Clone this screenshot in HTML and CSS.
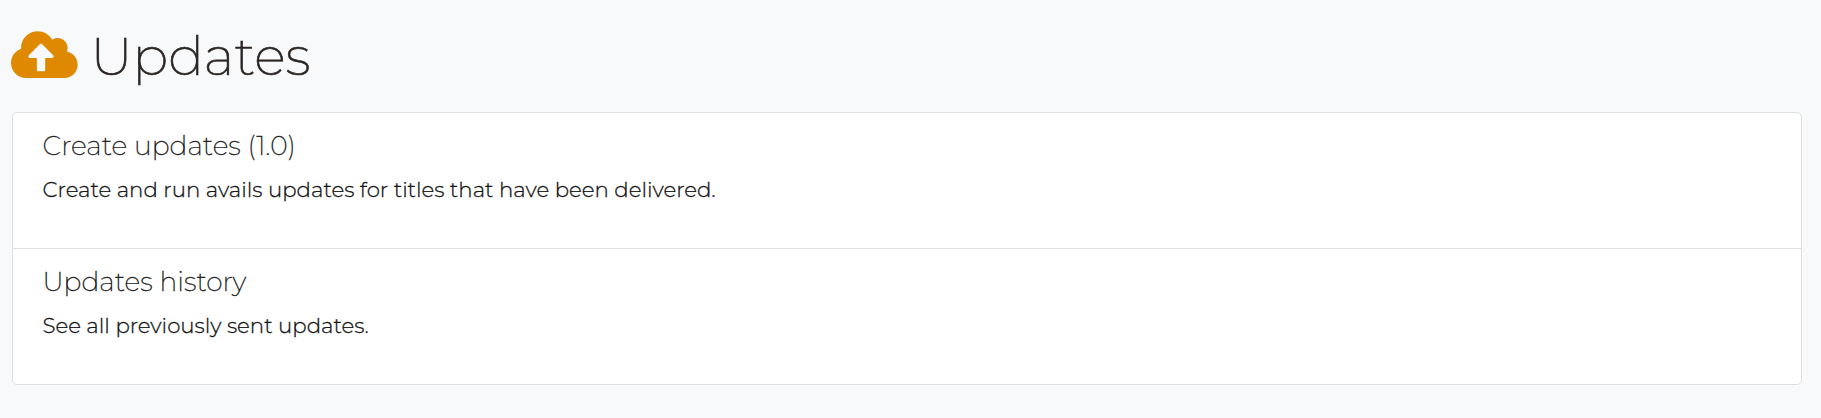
FILE: index.html
```
<!DOCTYPE html>
<html lang="en">
	<head>
		<meta charset="UTF-8">
		<title>Updates</title>
		<link rel="stylesheet" href="styles.css">
	</head>
	<body>
		<header class="page-header">
			<svg class="icon" viewBox="0 0 640 512" aria-hidden="true">
				<path fill="currentColor" d="M537.6 226.6c4.1-10.7 6.4-22.4 6.4-34.6 0-53-43-96-96-96-19.7 0-38.1 6-53.3 16.2C367 64.2 315.3 32 256 32c-88.4 0-160 71.6-160 160 0 2.7.1 5.4.2 8.1C40.2 219.8 0 273.2 0 336c0 79.5 64.5 144 144 144h368c70.7 0 128-57.3 128-128 0-61.9-44-113.6-102.4-125.4zM393.4 288H328v112c0 8.8-7.2 16-16 16h-48c-8.8 0-16-7.2-16-16V288h-65.4c-14.3 0-21.4-17.2-11.3-27.3l105.4-105.4c6.2-6.2 16.4-6.2 22.6 0l105.4 105.4c10.1 10.1 2.9 27.3-11.3 27.3z"/>
			</svg>
			<h1>Updates</h1>
		</header>
		<div class="list-group">
			<a class="list-item" href="#">
				<h4>Create updates (1.0)</h4>
				<p>Create and run avails updates for titles that have been delivered.</p>
			</a>
			<a class="list-item" href="#">
				<h4>Updates history</h4>
				<p>See all previously sent updates.</p>
			</a>
		</div>
	</body>
</html>
```
FILE: styles.css
```
*{
	box-sizing: border-box;
}
body{
	margin: 0;
	padding: 24px 19px 0 12px;
	background-color: #f8f9fb;
	color: #151515;
	font-family: Montserrat, Inter, sans-serif;
}
h1,h4,p{
	margin: 0;
	white-space: nowrap;
}
.page-header{
	display: flex;
	height: 88px;
}
.icon{
	width: 66.7px;
	height: 53.3px;
	margin: 4.4px 12.5px 0 -0.7px;
	color: #de8900;
}
h1{
	font-size: 53px;
	font-weight: 200;
	line-height: 64px;
	color: #2b2522;
	-webkit-text-stroke: 0.6px;
}
.list-group{
	background-color: #fff;
	border: 1px solid #dfdfdf;
	border-radius: 5px;
}
.list-item{
	display: block;
	height: 135px;
	padding: 17px 30px 16px 29.5px;
	color: inherit;
	text-decoration: none;
}
.list-item + .list-item{
	height: 136px;
	border-top: 1px solid #dfdfdf;
}
h4{
	font-size: 26.55px;
	font-weight: 200;
	line-height: 32px;
	-webkit-text-stroke: 0.3px;
}
p{
	margin-top: 11px;
	font-size: 21.3px;
	font-weight: 300;
	line-height: 32px;
	-webkit-text-stroke: 0.3px;
}
```
